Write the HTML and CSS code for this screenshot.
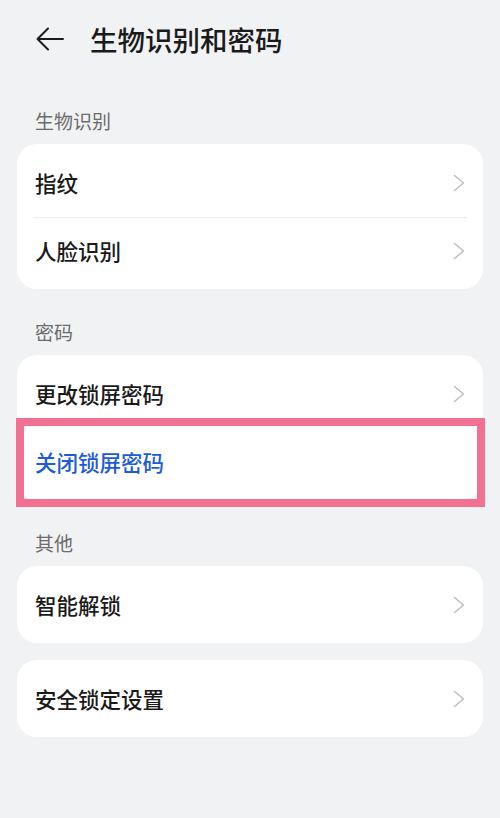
FILE: index.html
```html
<!DOCTYPE html>
<html>
<head>
    <meta charset="utf-8">
    <title>生物识别和密码</title>
    <link rel="stylesheet" href="styles.css">
</head>
<body>
    <div class="topbar">
        <svg class="back" width="28" height="24" viewBox="0 0 28 24">
            <path d="M12 1.5 L1.5 12 L12 22.5 M1.5 12 H27" fill="none" stroke="#1c1c1c" stroke-width="2" stroke-linecap="round" stroke-linejoin="round"/>
        </svg>
        <h1 class="title">生物识别和密码</h1>
    </div>

    <p class="group-title">生物识别</p>
    <div class="card">
        <div class="row"><span>指纹</span><svg class="chevron" width="12" height="18" viewBox="0 0 12 18"><path d="M1.5 1.5 L10.5 9 L1.5 16.5" /></svg></div>
        <div class="row"><span>人脸识别</span><svg class="chevron" width="12" height="18" viewBox="0 0 12 18"><path d="M1.5 1.5 L10.5 9 L1.5 16.5" /></svg></div>
    </div>

    <p class="group-title">密码</p>
    <div class="card">
        <div class="row"><span>更改锁屏密码</span><svg class="chevron" width="12" height="18" viewBox="0 0 12 18"><path d="M1.5 1.5 L10.5 9 L1.5 16.5" /></svg></div>
        <div class="row highlight"><span class="link">关闭锁屏密码</span></div>
    </div>

    <p class="group-title">其他</p>
    <div class="card">
        <div class="row"><span>智能解锁</span><svg class="chevron" width="12" height="18" viewBox="0 0 12 18"><path d="M1.5 1.5 L10.5 9 L1.5 16.5" /></svg></div>
    </div>
    <div class="card gap">
        <div class="row"><span>安全锁定设置</span><svg class="chevron" width="12" height="18" viewBox="0 0 12 18"><path d="M1.5 1.5 L10.5 9 L1.5 16.5" /></svg></div>
    </div>
</body>
</html>
```

FILE: styles.css
```css
*, *::before, *::after { padding: 0; margin: 0; box-sizing: border-box; }
body { background: #f1f2f4; font-family: 'Noto Sans CJK SC', 'Noto Sans', sans-serif; color: #1a1a1a; width: 500px; height: 818px; overflow: hidden; }

.topbar { display: flex; align-items: center; height: 78px; padding-left: 36px; }
.back { display: block; flex: none; }
.title { margin-left: 26px; font-size: 27.5px; font-weight: 500; line-height: 36px; color: #1a1a1a; }

.group-title { padding: 31px 35px 11px; font-size: 19px; line-height: 24px; color: #6b6b6b; }

.card { margin: 0 17px; background: #fff; border-radius: 20px; padding: 4.5px 0; }
.card.gap { margin-top: 17px; }

.row { display: flex; align-items: center; justify-content: space-between; height: 68px; padding: 0 18px 0 18px; font-size: 21.5px; font-weight: 500; position: relative; }
.row + .row::before { content: ''; position: absolute; top: 0; left: 16px; right: 16px; height: 1px; background: #ececec; }
.link { color: #1e5bd6; }

.chevron { display: block; flex: none; }
.chevron path { fill: none; stroke: #bdbdbd; stroke-width: 1.5; stroke-linecap: round; stroke-linejoin: round; }

/* pink annotation frame over the row */
.highlight::after { content: ''; position: absolute; top: -10px; bottom: -11px; left: -1px; right: -2px; border: 8px solid #f27092; }
.highlight::before { display: none; }
```
